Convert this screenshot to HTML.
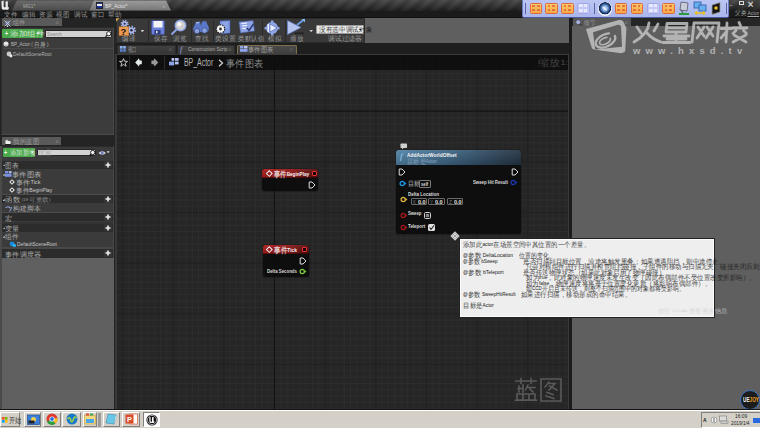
<!DOCTYPE html><html><head><meta charset="utf-8"><style>
*{box-sizing:border-box}
body{margin:0;width:760px;height:428px;overflow:hidden;background:#232323;font-family:"Liberation Sans",sans-serif;position:relative}
.ab{position:absolute}
.t{position:absolute;white-space:nowrap;line-height:1;transform-origin:0 50%}
.c{font-size:1.3em;letter-spacing:.02em;line-height:0;opacity:.8;position:relative;top:.15em}
svg.ab{overflow:visible}
</style></head><body><div class="ab" style="left:0.00px;top:0.00px;width:760.00px;height:10.60px;background:linear-gradient(#4a4a4a,#333 55%,#1e1e1e);"></div>
<div class="ab" style="left:0.00px;top:0.00px;width:760.00px;height:10.60px;background:repeating-linear-gradient(135deg,rgba(0,0,0,.13) 0,rgba(255,255,255,.04) 5.15px,rgba(0,0,0,.13) 10.3px);"></div>
<svg class="ab" style="left:0;top:0" width="10" height="10"><path d="M1.5,1.2 L3.6,0.6 L3.6,6.6 Q4.5,8 5.6,7 L5.6,1.6 L7.8,1.2 L7.8,7.6 L9,7 L8.6,9.2 Q6.6,10.4 5.4,9.4 Q2.6,10.2 1.8,8.4 Z" fill="#f0f0f0"/></svg>
<svg class="ab" style="left:12px;top:0" width="90" height="11"><defs><linearGradient id="g1" x1="0" y1="0" x2="0" y2="1"><stop offset="0" stop-color="#6a6a6a"/><stop offset="1" stop-color="#4a4a4a"/></linearGradient></defs><path d="M0,10.6 L5,0.5 L84,0.5 L88,10.6 Z" fill="url(#g1)"/></svg>
<div class="t" id="t0" style="left:23.00px;top:2.80px;font-size:6px;color:#a8a8a8;transform:scaleX(0.800);">MG1*</div>
<svg class="ab" style="left:89px;top:0" width="84" height="11"><defs><linearGradient id="g2" x1="0" y1="0" x2="0" y2="1"><stop offset="0" stop-color="#9c9c9c"/><stop offset="1" stop-color="#767676"/></linearGradient></defs><path d="M0.5,10.6 L5,0.5 L77,0.5 L82,10.6 Z" fill="url(#g2)"/></svg>
<div class="ab" style="left:96.00px;top:1.80px;width:7.20px;height:6.80px;background:linear-gradient(#2a3a70 0 12%,#f2f2f2 12% 62%,#1a2f90 62%);border:.6px solid #223"></div>
<div class="t" id="t1" style="left:105.40px;top:2.90px;font-size:6px;color:#e4e4e4;transform:scaleX(0.811);">BP_Actor*</div>
<div class="t" id="t2" style="left:161.50px;top:2.60px;font-size:6px;color:#aaa;"><span class="c">×</span></div>
<div class="ab" style="left:0.00px;top:10.60px;width:760.00px;height:7.20px;background:#1b1b1b;border-bottom:1px solid #111"></div>
<div class="t" id="t3" style="left:4.00px;top:12.20px;font-size:5px;color:#b4b4b4;transform:scaleX(0.925);"><span class="c">文件</span></div>
<div class="t" id="t4" style="left:22.00px;top:12.20px;font-size:5px;color:#b4b4b4;transform:scaleX(0.925);"><span class="c">编辑</span></div>
<div class="t" id="t5" style="left:39.00px;top:12.20px;font-size:5px;color:#b4b4b4;transform:scaleX(0.925);"><span class="c">资源</span></div>
<div class="t" id="t6" style="left:56.00px;top:12.20px;font-size:5px;color:#b4b4b4;transform:scaleX(0.925);"><span class="c">视图</span></div>
<div class="t" id="t7" style="left:74.00px;top:12.20px;font-size:5px;color:#b4b4b4;transform:scaleX(0.925);"><span class="c">调试</span></div>
<div class="t" id="t8" style="left:91.00px;top:12.20px;font-size:5px;color:#b4b4b4;transform:scaleX(0.925);"><span class="c">窗口</span></div>
<div class="t" id="t9" style="left:108.00px;top:12.20px;font-size:5px;color:#b4b4b4;transform:scaleX(0.925);"><span class="c">帮助</span></div>
<div class="t" id="t10" style="left:735.00px;top:11.30px;font-size:5.5px;color:#a8a8a8;transform:scaleX(0.917);">父类 <u>Actor</u></div>
<div class="ab" style="left:521.9px;top:-1px;width:207px;height:19px;background:linear-gradient(#bcc6f4,#aab6ec);border:1px solid #6a78c0;border-bottom:1px solid #4a58a0;border-radius:0 0 2px 2px"></div>
<div class="ab" style="left:529.80px;top:2.50px;width:12.50px;height:11.50px;background:linear-gradient(#fdc868,#f6a848);border:1px solid #e06a40;border-radius:1.5px"></div>
<div class="ab" style="left:532.40px;top:4.60px;width:2.80px;height:2.60px;background:rgba(214,50,30,.55);border-radius:.5px"></div>
<div class="ab" style="left:532.40px;top:8.90px;width:2.80px;height:2.60px;background:rgba(214,50,30,.55);border-radius:.5px"></div>
<div class="ab" style="left:536.90px;top:4.60px;width:2.80px;height:2.60px;background:rgba(214,50,30,.55);border-radius:.5px"></div>
<div class="ab" style="left:536.90px;top:8.90px;width:2.80px;height:2.60px;background:rgba(214,50,30,.55);border-radius:.5px"></div>
<div class="ab" style="left:545.00px;top:2.50px;width:12.50px;height:11.50px;background:linear-gradient(#fdc868,#f6a848);border:1px solid #e06a40;border-radius:1.5px"></div>
<div class="ab" style="left:547.60px;top:4.60px;width:2.80px;height:2.60px;background:rgba(214,50,30,.55);border-radius:.5px"></div>
<div class="ab" style="left:547.60px;top:8.90px;width:2.80px;height:2.60px;background:rgba(214,50,30,.55);border-radius:.5px"></div>
<div class="ab" style="left:552.10px;top:4.60px;width:2.80px;height:2.60px;background:rgba(214,50,30,.55);border-radius:.5px"></div>
<div class="ab" style="left:552.10px;top:8.90px;width:2.80px;height:2.60px;background:rgba(214,50,30,.55);border-radius:.5px"></div>
<div class="ab" style="left:561.00px;top:2.50px;width:12.50px;height:11.50px;background:linear-gradient(#fdc868,#f6a848);border:1px solid #e06a40;border-radius:1.5px"></div>
<div class="ab" style="left:563.60px;top:4.60px;width:2.80px;height:2.60px;background:rgba(214,50,30,.55);border-radius:.5px"></div>
<div class="ab" style="left:563.60px;top:8.90px;width:2.80px;height:2.60px;background:rgba(214,50,30,.55);border-radius:.5px"></div>
<div class="ab" style="left:568.10px;top:4.60px;width:2.80px;height:2.60px;background:rgba(214,50,30,.55);border-radius:.5px"></div>
<div class="ab" style="left:568.10px;top:8.90px;width:2.80px;height:2.60px;background:rgba(214,50,30,.55);border-radius:.5px"></div>
<div class="ab" style="left:577.00px;top:2.50px;width:12.50px;height:11.50px;background:#c4c8f6;border:1px solid #a4a8e8;border-radius:1.5px"></div>
<div class="ab" style="left:579.40px;top:4.40px;width:3.20px;height:3.00px;background:rgba(245,245,255,.7);border-radius:.5px"></div>
<div class="ab" style="left:579.40px;top:8.70px;width:3.20px;height:3.00px;background:rgba(245,245,255,.7);border-radius:.5px"></div>
<div class="ab" style="left:583.90px;top:4.40px;width:3.20px;height:3.00px;background:rgba(245,245,255,.7);border-radius:.5px"></div>
<div class="ab" style="left:583.90px;top:8.70px;width:3.20px;height:3.00px;background:rgba(245,245,255,.7);border-radius:.5px"></div>
<div class="ab" style="left:597.7px;top:1.5px;width:14px;height:14px;border-radius:50%;background:radial-gradient(circle at 50% 45%,#e0ecf8 0,#8ab0e0 2.5px,#2a5090 4.6px,#101e40 5.8px,#f0f4fc 6.4px)"></div>
<div class="ab" style="left:602.20px;top:7.50px;width:5.00px;height:1.40px;background:#ffffff;transform:rotate(45deg)"></div>
<div class="ab" style="left:614.80px;top:2.50px;width:12.50px;height:11.50px;background:linear-gradient(#fdc868,#f6a848);border:1px solid #e06a40;border-radius:1.5px"></div>
<div class="ab" style="left:617.40px;top:4.60px;width:2.80px;height:2.60px;background:rgba(214,50,30,.55);border-radius:.5px"></div>
<div class="ab" style="left:617.40px;top:8.90px;width:2.80px;height:2.60px;background:rgba(214,50,30,.55);border-radius:.5px"></div>
<div class="ab" style="left:621.90px;top:4.60px;width:2.80px;height:2.60px;background:rgba(214,50,30,.55);border-radius:.5px"></div>
<div class="ab" style="left:621.90px;top:8.90px;width:2.80px;height:2.60px;background:rgba(214,50,30,.55);border-radius:.5px"></div>
<div class="ab" style="left:630.60px;top:2.50px;width:12.50px;height:11.50px;background:linear-gradient(#fdc868,#f6a848);border:1px solid #e06a40;border-radius:1.5px"></div>
<div class="ab" style="left:633.20px;top:4.60px;width:2.80px;height:2.60px;background:rgba(214,50,30,.55);border-radius:.5px"></div>
<div class="ab" style="left:633.20px;top:8.90px;width:2.80px;height:2.60px;background:rgba(214,50,30,.55);border-radius:.5px"></div>
<div class="ab" style="left:637.70px;top:4.60px;width:2.80px;height:2.60px;background:rgba(214,50,30,.55);border-radius:.5px"></div>
<div class="ab" style="left:637.70px;top:8.90px;width:2.80px;height:2.60px;background:rgba(214,50,30,.55);border-radius:.5px"></div>
<div class="ab" style="left:647.00px;top:2.50px;width:12.50px;height:11.50px;background:#c4c8f6;border:1px solid #a4a8e8;border-radius:1.5px"></div>
<div class="ab" style="left:649.40px;top:4.40px;width:3.20px;height:3.00px;background:rgba(245,245,255,.7);border-radius:.5px"></div>
<div class="ab" style="left:649.40px;top:8.70px;width:3.20px;height:3.00px;background:rgba(245,245,255,.7);border-radius:.5px"></div>
<div class="ab" style="left:653.90px;top:4.40px;width:3.20px;height:3.00px;background:rgba(245,245,255,.7);border-radius:.5px"></div>
<div class="ab" style="left:653.90px;top:8.70px;width:3.20px;height:3.00px;background:rgba(245,245,255,.7);border-radius:.5px"></div>
<div class="ab" style="left:662.00px;top:2.50px;width:12.50px;height:11.50px;background:linear-gradient(#fdc868,#f6a848);border:1px solid #e06a40;border-radius:1.5px"></div>
<div class="ab" style="left:664.60px;top:4.60px;width:2.80px;height:2.60px;background:rgba(214,50,30,.55);border-radius:.5px"></div>
<div class="ab" style="left:664.60px;top:8.90px;width:2.80px;height:2.60px;background:rgba(214,50,30,.55);border-radius:.5px"></div>
<div class="ab" style="left:669.10px;top:4.60px;width:2.80px;height:2.60px;background:rgba(214,50,30,.55);border-radius:.5px"></div>
<div class="ab" style="left:669.10px;top:8.90px;width:2.80px;height:2.60px;background:rgba(214,50,30,.55);border-radius:.5px"></div>
<svg class="ab" style="left:678px;top:1px" width="12" height="15"><path d="M3,1 L10,2 L9,10 L2,9 Z" fill="#c8ccd8" stroke="#556" stroke-width=".8"/><path d="M3,9 L5,12" stroke="#555" stroke-width="1.2"/><rect x="1" y="12" width="10" height="2" fill="#2a9a3a"/></svg>
<svg class="ab" style="left:693px;top:1px" width="14" height="15"><rect x="1" y="1" width="7" height="6" fill="#6ab0f0" stroke="#2a5aa8" stroke-width=".8"/><rect x="6" y="4" width="7" height="6" fill="#6ab0f0" stroke="#2a5aa8" stroke-width=".8"/><path d="M2,12 L12,12 M2,12 L4,10.5 M2,12 L4,13.5 M12,12 L10,10.5 M12,12 L10,13.5" stroke="#e8c020" stroke-width="1.3"/></svg>
<svg class="ab" style="left:710px;top:1px" width="12" height="15"><path d="M2,4 L10,1.5 L10,11 L2,13.5 Z" fill="#151515" stroke="#999" stroke-width=".8"/><circle cx="6" cy="7" r="1.8" fill="#e8c030"/></svg>
<div class="ab" style="left:525.30px;top:3.00px;width:1.20px;height:10.50px;background:#5a64a0;"></div>
<div class="ab" style="left:593.80px;top:3.00px;width:1.20px;height:10.50px;background:#5a64a0;"></div>
<div class="ab" style="left:726.00px;top:3.00px;width:1.20px;height:10.50px;background:#5a64a0;"></div>
<div class="t" id="t11" style="left:729.50px;top:1.00px;font-size:5px;color:#ccc;">_</div>
<div class="ab" style="left:738.50px;top:1.00px;width:5.00px;height:4.20px;background:transparent;border:1.2px solid #ddd"></div>
<div class="t" id="t12" style="left:747.50px;top:0.00px;font-size:8px;color:#eee;font-weight:bold;"><span class="c">×</span></div>
<div class="ab" style="left:0.00px;top:17.80px;width:116.00px;height:392.00px;background:#242424;"></div>
<div class="ab" style="left:2.00px;top:18.20px;width:59.60px;height:8.30px;background:#5a5a5a;border-radius:1px 1px 0 0"></div>
<svg class="ab" style="left:4px;top:19.5px" width="7" height="7"><circle cx="3.5" cy="3" r="2.2" fill="#7a84a8"/><path d="M0.5,0.5 L6.5,6.5 M6.5,0.5 L0.5,6.5" stroke="#c8d0e8" stroke-width=".8"/><circle cx="3.5" cy="6.3" r=".8" fill="#eee"/></svg>
<div class="t" id="t13" style="left:13.00px;top:20.30px;font-size:5px;color:#a8a8a8;transform:scaleX(0.877);"><span class="c">组件</span></div>
<div class="t" id="t14" style="left:55.00px;top:19.80px;font-size:5.5px;color:#8a8a8a;"><span class="c">×</span></div>
<div class="ab" style="left:0.80px;top:26.50px;width:113.00px;height:108.20px;background:#3c3c3c;border:1px solid;border-color:#2a2a2a #484848 #4a4a4a #2a2a2a"></div>
<div class="ab" style="left:2.30px;top:28.80px;width:40.70px;height:9.50px;background:#4aa94a;border-radius:1px"></div>
<div class="t" id="t15" style="left:5.00px;top:30.30px;font-size:7.5px;color:#fff;font-weight:bold;transform:scaleX(0.700);">+</div>
<div class="t" id="t16" style="left:9.50px;top:31.30px;font-size:5.5px;color:#f4f4f4;transform:scaleX(1.215);"><span class="c">添加组件</span></div>
<div class="ab" style="left:36.50px;top:32.40px;width:3.40px;height:2.10px;background:#f0f0f0;clip-path:polygon(0 0,100% 0,50% 100%)"></div>
<div class="ab" style="left:45.00px;top:29.70px;width:67.00px;height:7.90px;background:#d2d2d2;border:.8px solid #262626;border-radius:1px"></div>
<div class="t" id="t17" style="left:47.40px;top:31.20px;font-size:6px;color:#8a8a8a;transform:scaleX(0.789);">Search</div>
<svg class="ab" style="left:104px;top:29.5px" width="8" height="8"><circle cx="4.7" cy="3.7" r="2.1" fill="#f8f8f8" stroke="#161616" stroke-width=".9"/><path d="M3.1,5.4 L1.6,6.9" stroke="#111" stroke-width="1.3"/></svg>
<svg class="ab" style="left:2.5px;top:41px" width="6" height="6"><circle cx="3" cy="3" r="2.5" fill="#e8e8e8"/><path d="M1,4 Q3,5.5 5,4" stroke="#777" stroke-width=".5" fill="none"/></svg>
<div class="t" id="t18" style="left:11.00px;top:41.50px;font-size:5.5px;color:#bdbdbd;transform:scaleX(0.817);">BP_Actor ( <span class="c">自身</span> )</div>
<div class="ab" style="left:2.50px;top:48.00px;width:110.00px;height:1.00px;background:#4a4a4a;"></div>
<svg class="ab" style="left:5.5px;top:51px" width="7" height="7"><circle cx="3" cy="3" r="2.4" fill="#c8c8c8"/><circle cx="5" cy="5" r="1.4" fill="#eee"/></svg>
<div class="t" id="t19" style="left:13.00px;top:52.08px;font-size:5.3px;color:#b4b4b4;transform:scaleX(0.895);">DefaultSceneRoot</div>
<div class="ab" style="left:2.00px;top:137.30px;width:59.30px;height:8.00px;background:#5a5a5a;border-radius:1px 1px 0 0"></div>
<svg class="ab" style="left:4.5px;top:138.5px" width="6" height="6"><path d="M0.5,5.5 L0.5,1.5 L2.5,0.5 L2.5,2 L5.5,2 L5.5,5.5 Z" fill="#eee"/><rect x="0" y="5" width="6" height="1" fill="#222"/></svg>
<div class="t" id="t20" style="left:13.00px;top:139.30px;font-size:5px;color:#a8a8a8;transform:scaleX(0.916);"><span class="c">我的蓝图</span></div>
<div class="t" id="t21" style="left:55.00px;top:138.80px;font-size:5.5px;color:#8a8a8a;"><span class="c">×</span></div>
<div class="ab" style="left:0.80px;top:145.50px;width:113.00px;height:113.00px;background:#3a3a3a;border:1px solid;border-color:#2a2a2a #484848 #4a4a4a #2a2a2a"></div>
<div class="ab" style="left:2.50px;top:147.90px;width:32.50px;height:9.10px;background:#4aa94a;border-radius:1px"></div>
<div class="t" id="t22" style="left:4.30px;top:149.40px;font-size:7.5px;color:#fff;font-weight:bold;transform:scaleX(0.700);">+</div>
<div class="t" id="t23" style="left:9.80px;top:150.20px;font-size:5px;color:#f0f0f0;transform:scaleX(0.911);"><span class="c">添加新项</span></div>
<div class="ab" style="left:30.50px;top:151.30px;width:3.40px;height:2.10px;background:#f0f0f0;clip-path:polygon(0 0,100% 0,50% 100%)"></div>
<div class="ab" style="left:37.00px;top:148.70px;width:58.50px;height:7.50px;background:#d2d2d2;border:.8px solid #262626;border-radius:1px"></div>
<div class="t" id="t24" style="left:38.30px;top:150.30px;font-size:5px;color:#a8a8a8;transform:scaleX(0.916);"><span class="c">搜索</span></div>
<svg class="ab" style="left:88.2px;top:148.7px" width="8" height="8"><circle cx="4.7" cy="3.5" r="2.1" fill="#f8f8f8" stroke="#161616" stroke-width=".9"/><path d="M3.1,5.2 L1.6,6.7" stroke="#111" stroke-width="1.3"/></svg>
<svg class="ab" style="left:97.5px;top:149.5px" width="9" height="6"><path d="M0.4,3 Q4.2,-0.6 8,3 Q4.2,6.6 0.4,3 Z" fill="#d8d8e4"/><circle cx="4.2" cy="3" r="1.4" fill="#6a78c0"/></svg>
<div class="ab" style="left:106.50px;top:151.30px;width:3.20px;height:2.00px;background:#e0e0e0;clip-path:polygon(0 0,100% 0,50% 100%)"></div>
<div class="ab" style="left:2.00px;top:160.60px;width:111.00px;height:8.40px;background:#2c2c2c;"></div>
<div class="ab" style="left:2.50px;top:164.30px;width:2.20px;height:2.20px;background:#c8c8c8;clip-path:polygon(100% 0,100% 100%,0 100%)"></div>
<div class="t" id="t25" style="left:4.90px;top:162.90px;font-size:5.5px;color:#c8c8c8;transform:scaleX(0.952);"><span class="c">图表</span></div>
<div class="ab" style="left:104.00px;top:161.20px;width:8.00px;height:7.20px;background:#353535;border-radius:1px"></div>
<svg class="ab" style="left:105px;top:161.80px" width="6" height="6"><path d="M3,0.5 L3,5.5 M0.5,3 L5.5,3" stroke="#eee" stroke-width="1.6"/></svg>
<div class="ab" style="left:2.00px;top:169.00px;width:111.00px;height:25.30px;background:#3b3b3b;"></div>
<div class="ab" style="left:2.50px;top:173.50px;width:2.20px;height:2.20px;background:#c8c8c8;clip-path:polygon(100% 0,100% 100%,0 100%)"></div>
<svg class="ab" style="left:5px;top:171px" width="7" height="6"><rect x="0" y="3" width="6.5" height="2.8" fill="#7a90e0"/><rect x="0" y="0" width="3" height="2.5" fill="#7a90e0"/><rect x="3.7" y="0" width="2.8" height="2.5" fill="#a8b8f0"/></svg>
<div class="t" id="t26" style="left:12.30px;top:171.90px;font-size:5.5px;color:#cccccc;transform:scaleX(1.030);"><span class="c">事件图表</span></div>
<div class="ab" style="left:10.00px;top:180.00px;width:4.00px;height:4.00px;background:transparent;border:1px solid #eee;transform:rotate(45deg)"></div>
<div class="t" id="t27" style="left:16.30px;top:179.80px;font-size:5.5px;color:#cccccc;transform:scaleX(1.010);"><span class="c">事件</span>Tick</div>
<div class="ab" style="left:10.00px;top:188.20px;width:4.00px;height:4.00px;background:transparent;border:1px solid #eee;transform:rotate(45deg)"></div>
<div class="t" id="t28" style="left:16.30px;top:188.00px;font-size:5.5px;color:#cccccc;transform:scaleX(0.926);"><span class="c">事件</span>BeginPlay</div>
<div class="ab" style="left:2.00px;top:194.30px;width:111.00px;height:0.80px;background:#4c4c4c;"></div>
<div class="ab" style="left:2.00px;top:195.00px;width:111.00px;height:8.40px;background:#2c2c2c;"></div>
<div class="ab" style="left:2.50px;top:198.70px;width:2.20px;height:2.20px;background:#c8c8c8;clip-path:polygon(100% 0,100% 100%,0 100%)"></div>
<div class="t" id="t29" style="left:4.90px;top:197.30px;font-size:5.5px;color:#c8c8c8;transform:scaleX(1.067);"><span class="c">函数</span><span style="font-size:4.3px;color:#999"> (19 <span class="c">可重载</span>)</span></div>
<div class="ab" style="left:104.00px;top:195.60px;width:8.00px;height:7.20px;background:#353535;border-radius:1px"></div>
<svg class="ab" style="left:105px;top:196.20px" width="6" height="6"><path d="M3,0.5 L3,5.5 M0.5,3 L5.5,3" stroke="#eee" stroke-width="1.6"/></svg>
<div class="ab" style="left:2.00px;top:203.40px;width:111.00px;height:8.60px;background:#3b3b3b;"></div>
<svg class="ab" style="left:5px;top:205px" width="8" height="7"><path d="M0.5,2.5 Q3,1 5,2.5" stroke="#9ab0e8" stroke-width="1" fill="none"/><path d="M4.2,1.5 L5.6,2.6 L4,3.4" fill="#9ab0e8"/><path d="M6.5,2 Q6,5 4.5,6.5" stroke="#9ab0e8" stroke-width="1" fill="none"/></svg>
<div class="t" id="t30" style="left:12.80px;top:205.80px;font-size:5.5px;color:#cccccc;transform:scaleX(0.967);"><span class="c">构建脚本</span></div>
<div class="ab" style="left:2.00px;top:212.00px;width:111.00px;height:1.00px;background:#4c4c4c;"></div>
<div class="ab" style="left:2.00px;top:213.30px;width:111.00px;height:8.20px;background:#2c2c2c;"></div>
<div class="t" id="t31" style="left:4.90px;top:215.50px;font-size:5.5px;color:#c8c8c8;transform:scaleX(0.989);"><span class="c">宏</span></div>
<div class="ab" style="left:104.00px;top:213.90px;width:8.00px;height:7.00px;background:#353535;border-radius:1px"></div>
<svg class="ab" style="left:105px;top:214.40px" width="6" height="6"><path d="M3,0.5 L3,5.5 M0.5,3 L5.5,3" stroke="#eee" stroke-width="1.6"/></svg>
<div class="ab" style="left:2.00px;top:221.50px;width:111.00px;height:2.10px;background:#333;"></div>
<div class="ab" style="left:2.00px;top:223.60px;width:111.00px;height:8.20px;background:#2c2c2c;"></div>
<div class="ab" style="left:2.50px;top:227.20px;width:2.20px;height:2.20px;background:#c8c8c8;clip-path:polygon(100% 0,100% 100%,0 100%)"></div>
<div class="t" id="t32" style="left:4.90px;top:225.80px;font-size:5.5px;color:#c8c8c8;transform:scaleX(1.029);"><span class="c">变量</span></div>
<div class="ab" style="left:104.00px;top:224.20px;width:8.00px;height:7.00px;background:#353535;border-radius:1px"></div>
<svg class="ab" style="left:105px;top:224.70px" width="6" height="6"><path d="M3,0.5 L3,5.5 M0.5,3 L5.5,3" stroke="#eee" stroke-width="1.6"/></svg>
<div class="ab" style="left:2.00px;top:231.80px;width:111.00px;height:15.50px;background:#3b3b3b;"></div>
<div class="ab" style="left:2.50px;top:235.50px;width:2.20px;height:2.20px;background:#c8c8c8;clip-path:polygon(100% 0,100% 100%,0 100%)"></div>
<div class="t" id="t33" style="left:4.90px;top:233.78px;font-size:5.3px;color:#c4c4c4;transform:scaleX(0.953);"><span class="c">组件</span></div>
<svg class="ab" style="left:8.5px;top:240.5px" width="8" height="7"><circle cx="3" cy="2.8" r="2.4" fill="#1a8ad8"/><circle cx="5.3" cy="4.5" r="1.8" fill="#28b0f0"/></svg>
<div class="t" id="t34" style="left:16.50px;top:241.50px;font-size:5.5px;color:#cccccc;transform:scaleX(0.891);">DefaultSceneRoot</div>
<div class="ab" style="left:2.00px;top:247.30px;width:111.00px;height:1.70px;background:#474747;"></div>
<div class="ab" style="left:2.00px;top:249.00px;width:111.00px;height:8.80px;background:#2c2c2c;"></div>
<div class="t" id="t35" style="left:4.90px;top:251.50px;font-size:5.5px;color:#c8c8c8;transform:scaleX(1.015);"><span class="c">事件调度器</span></div>
<div class="ab" style="left:104.00px;top:249.60px;width:8.00px;height:7.60px;background:#353535;border-radius:1px"></div>
<svg class="ab" style="left:105px;top:250.40px" width="6" height="6"><path d="M3,0.5 L3,5.5 M0.5,3 L5.5,3" stroke="#eee" stroke-width="1.6"/></svg>
<div class="ab" style="left:1.50px;top:258.00px;width:112.30px;height:151.20px;background:#606060;"></div>
<div class="ab" style="left:0.00px;top:145.50px;width:1.50px;height:263.70px;background:#4a4a4a;"></div>
<div class="ab" style="left:116.00px;top:17.80px;width:454.00px;height:25.40px;background:#5f5f5f;"></div>
<div class="ab" style="left:116.00px;top:18.30px;width:248.80px;height:24.40px;background:#393939;border:1px solid #2b2b2b;border-radius:1px"></div>
<div class="ab" style="left:116.00px;top:18.30px;width:3.50px;height:3.50px;background:#d0a848;clip-path:polygon(0 0,100% 0,0 100%)"></div>
<div class="ab" style="left:147.60px;top:19.50px;width:1.00px;height:22.00px;background:#2a2a2a;"></div>
<div class="ab" style="left:190.60px;top:19.50px;width:1.00px;height:22.00px;background:#2a2a2a;"></div>
<div class="ab" style="left:212.70px;top:19.50px;width:1.00px;height:22.00px;background:#2a2a2a;"></div>
<div class="ab" style="left:261.60px;top:19.50px;width:1.00px;height:22.00px;background:#2a2a2a;"></div>
<div class="ab" style="left:284.50px;top:19.50px;width:1.00px;height:22.00px;background:#2a2a2a;"></div>
<div class="t" id="t36" style="left:121.90px;top:36.30px;font-size:5px;color:#b0b0b0;transform:scaleX(0.925);"><span class="c">编译</span></div>
<div class="t" id="t37" style="left:153.50px;top:36.30px;font-size:5px;color:#b0b0b0;transform:scaleX(0.925);"><span class="c">保存</span></div>
<div class="t" id="t38" style="left:173.20px;top:36.30px;font-size:5px;color:#b0b0b0;transform:scaleX(0.925);"><span class="c">浏览</span></div>
<div class="t" id="t39" style="left:195.40px;top:36.30px;font-size:5px;color:#b0b0b0;transform:scaleX(0.916);"><span class="c">查找</span></div>
<div class="t" id="t40" style="left:215.00px;top:36.30px;font-size:5px;color:#b0b0b0;transform:scaleX(0.975);"><span class="c">类设置</span></div>
<div class="t" id="t41" style="left:237.90px;top:36.30px;font-size:5px;color:#b0b0b0;transform:scaleX(0.925);"><span class="c">类默认值</span></div>
<div class="t" id="t42" style="left:267.90px;top:36.30px;font-size:5px;color:#b0b0b0;transform:scaleX(0.925);"><span class="c">模拟</span></div>
<div class="t" id="t43" style="left:290.00px;top:36.30px;font-size:5px;color:#b0b0b0;transform:scaleX(0.925);"><span class="c">播放</span></div>
<div class="t" id="t44" style="left:328.00px;top:36.30px;font-size:5px;color:#b0b0b0;transform:scaleX(0.955);"><span class="c">调试过滤器</span></div>
<svg class="ab" style="left:117px;top:18.5px" width="22" height="19">
<g fill="#aab6ec"><circle cx="7.6" cy="4.8" r="2.7"/><circle cx="14.5" cy="11.3" r="3.1"/></g>
<g fill="none" stroke="#aab6ec" stroke-width="1.5"><circle cx="7.6" cy="4.8" r="3.3" stroke-dasharray="1.3 1.3"/><circle cx="14.5" cy="11.3" r="3.8" stroke-dasharray="1.5 1.4"/></g>
<g fill="#2a2a3a"><circle cx="7.6" cy="4.8" r="1"/><circle cx="14.5" cy="11.3" r="1.2"/></g>
<rect x="2" y="7.7" width="9.8" height="8.9" fill="#ec9a50" stroke="#b06a30" stroke-width=".4"/>
<text x="3.6" y="15.6" font-family="Liberation Sans" font-weight="bold" font-size="9.5" fill="#111">?</text></svg>
<div class="ab" style="left:140.60px;top:30.00px;width:3.60px;height:2.20px;background:#d0d0d0;clip-path:polygon(0 0,100% 0,50% 100%)"></div>
<svg class="ab" style="left:151px;top:19.5px" width="14" height="15"><rect x="0.5" y="0.5" width="13" height="14" rx="1" fill="#6a80d8" stroke="#3a4a90" stroke-width=".6"/><rect x="2.5" y="1" width="9" height="6.5" fill="#f4f4f4"/><rect x="3.5" y="10" width="6" height="4" fill="#2a3a80"/><rect x="5" y="10.8" width="1.6" height="2.5" fill="#ddd"/></svg>
<svg class="ab" style="left:170px;top:19px" width="18" height="17"><circle cx="10.5" cy="6.5" r="5.3" fill="#cfcfcf" stroke="#8ea4e4" stroke-width="1.4"/><circle cx="9.3" cy="5.2" r="2.2" fill="#f4f4f4"/><path d="M6.5,10.5 L1.5,15.5" stroke="#8ea4e4" stroke-width="2"/></svg>
<svg class="ab" style="left:192px;top:20px" width="18" height="15"><path d="M1,9 L4,2 L8,1.5 L9,6 L10,1.5 L14,1 L17,8 L16,12 L2,12 Z" fill="#5a78c8"/><circle cx="5" cy="11" r="2.7" fill="#8aa0e0" stroke="#2a3a70" stroke-width=".6"/><circle cx="12.5" cy="10.5" r="2.7" fill="#8aa0e0" stroke="#2a3a70" stroke-width=".6"/><path d="M4,3 L7,2.5" stroke="#c0d0f8" stroke-width="1"/></svg>
<svg class="ab" style="left:214px;top:19.5px" width="18" height="16"><path d="M6,1 L16,0.5 L16,13 L6,14 Z" fill="#7c96e0" stroke="#4a60b0" stroke-width=".5"/><path d="M8,3 L14,3 M8,5 L14,5 M8,7 L14,7" stroke="#b8c8f4" stroke-width=".6"/><circle cx="6.5" cy="9" r="4.2" fill="#f4f4f4" stroke="#222" stroke-width="1.2" stroke-dasharray="1.6 1"/><circle cx="6.5" cy="9" r="1.4" fill="#333"/></svg>
<svg class="ab" style="left:238px;top:20px" width="18" height="15"><path d="M1,2 L15,0.5 L16.5,11 L2.5,13 Z" fill="#8ea4e4" stroke="#4a5ea8" stroke-width=".6"/><path d="M3.5,3.5 L9,3 M4,6 L9,5.5 M4.3,8.5 L8,8.2" stroke="#fff" stroke-width="1"/><path d="M9,8 L11,10.5 L15.5,4" stroke="#2a3a70" stroke-width="1.4" fill="none"/></svg>
<svg class="ab" style="left:264px;top:19.5px" width="17" height="16"><circle cx="8" cy="8" r="6" fill="#8ea4e4"/><g fill="#8ea4e4"><rect x="7" y="0.5" width="2.5" height="3"/><rect x="7" y="12.5" width="2.5" height="3"/><rect x="0.5" y="7" width="3" height="2.5"/><rect x="12.5" y="7" width="3" height="2.5"/></g><path d="M6,4 L13,8 L6,12 Z" fill="#e8eeff" stroke="#4a5ea8" stroke-width=".6"/><rect x="3.5" y="4" width="1.5" height="8" fill="#e8eeff"/></svg>
<svg class="ab" style="left:286px;top:19px" width="20" height="17"><path d="M1.5,1.5 L15,8.5 L1.5,15.5 Z" fill="#b4c4ee" stroke="#6a80c8" stroke-width=".7"/><path d="M11,6 L17.5,1" stroke="#6aa0e8" stroke-width="1.8"/><path d="M15.5,0 L19,0 L19,3.5 Z" fill="#8ab8f0"/><rect x="9" y="13.5" width="9" height="1.5" fill="#222"/></svg>
<div class="ab" style="left:309.40px;top:30.00px;width:3.60px;height:2.20px;background:#d0d0d0;clip-path:polygon(0 0,100% 0,50% 100%)"></div>
<div class="ab" style="left:315.80px;top:25.20px;width:48.20px;height:8.50px;background:#e8e8e8;border:1px solid #9a9a9a;border-radius:1px"></div>
<div class="t" id="t45" style="left:318.60px;top:27.38px;font-size:5.3px;color:#111;transform:scaleX(0.932);"><span class="c">没有选中调试对象</span></div>
<div class="ab" style="left:358.50px;top:28.60px;width:3.50px;height:2.00px;background:#111;clip-path:polygon(0 0,100% 0,50% 100%)"></div>
<div class="ab" style="left:116.00px;top:43.20px;width:454.00px;height:10.80px;background:#1f1f1f;"></div>
<div class="ab" style="left:117.00px;top:45.20px;width:59.00px;height:8.60px;background:linear-gradient(#404040,#363636);border:1px solid #2c2c2c;border-bottom:none;border-radius:1.5px 1.5px 0 0"></div>
<div class="t" id="t46" style="left:168.50px;top:46.80px;font-size:5px;color:#707070;"><span class="c">×</span></div>
<svg class="ab" style="left:119.7px;top:46.2px" width="6" height="6"><rect x="0" y="0" width="2.6" height="2.6" fill="#8ab0f0"/><rect x="3.2" y="0" width="2.6" height="2.6" fill="#8ab0f0"/><rect x="0" y="3.2" width="2.6" height="2.6" fill="#5a80d0"/><rect x="3.2" y="3.2" width="2.6" height="2.6" fill="#5a80d0"/></svg>
<div class="t" id="t47" style="left:128.40px;top:47.00px;font-size:5px;color:#a8a8a8;transform:scaleX(0.604);"><span class="c">视口</span></div>
<div class="ab" style="left:177.40px;top:45.20px;width:58.00px;height:8.60px;background:linear-gradient(#404040,#363636);border:1px solid #2c2c2c;border-bottom:none;border-radius:1.5px 1.5px 0 0"></div>
<div class="t" id="t48" style="left:227.90px;top:46.80px;font-size:5px;color:#707070;"><span class="c">×</span></div>
<div class="t" id="t49" style="left:180.00px;top:45.80px;font-size:8px;color:#8ea0e0;font-style:italic;font-family:'Liberation Serif',serif;">f</div>
<div class="t" id="t50" style="left:187.90px;top:46.68px;font-size:5.3px;color:#b0b0b0;transform:scaleX(0.911);">Construction Scrip</div>
<div class="ab" style="left:237.20px;top:45.20px;width:59.50px;height:8.60px;background:linear-gradient(#4a4a4a,#3e3e3e);border:1px solid #7a6e48;border-bottom:none;border-radius:1.5px 1.5px 0 0"></div>
<div class="t" id="t51" style="left:289.20px;top:46.80px;font-size:5px;color:#707070;"><span class="c">×</span></div>
<svg class="ab" style="left:239.5px;top:46.3px" width="8" height="6"><rect x="0" y="3" width="7.5" height="2.8" fill="#8ea4e8"/><rect x="0" y="0" width="3.3" height="2.5" fill="#8ea4e8"/><rect x="4" y="0" width="3.5" height="2.5" fill="#b8c4f0"/></svg>
<div class="t" id="t52" style="left:248.30px;top:46.80px;font-size:5px;color:#b8b8b8;transform:scaleX(0.896);"><span class="c">事件图表</span></div>
<div class="ab" style="left:117px;top:54px;width:452.3px;height:355.2px;background:#262626;overflow:hidden">
<svg width="452.3" height="355.2" style="position:absolute;left:0;top:0"><g stroke="#2c2c2c" stroke-width="1.1"><line x1="11.89" y1="0" x2="11.89" y2="355.2"/><line x1="18.22" y1="0" x2="18.22" y2="355.2"/><line x1="24.55" y1="0" x2="24.55" y2="355.2"/><line x1="30.88" y1="0" x2="30.88" y2="355.2"/><line x1="37.21" y1="0" x2="37.21" y2="355.2"/><line x1="43.54" y1="0" x2="43.54" y2="355.2"/><line x1="49.87" y1="0" x2="49.87" y2="355.2"/><line x1="62.53" y1="0" x2="62.53" y2="355.2"/><line x1="68.87" y1="0" x2="68.87" y2="355.2"/><line x1="75.20" y1="0" x2="75.20" y2="355.2"/><line x1="81.53" y1="0" x2="81.53" y2="355.2"/><line x1="87.86" y1="0" x2="87.86" y2="355.2"/><line x1="94.19" y1="0" x2="94.19" y2="355.2"/><line x1="100.52" y1="0" x2="100.52" y2="355.2"/><line x1="113.18" y1="0" x2="113.18" y2="355.2"/><line x1="119.51" y1="0" x2="119.51" y2="355.2"/><line x1="125.84" y1="0" x2="125.84" y2="355.2"/><line x1="132.18" y1="0" x2="132.18" y2="355.2"/><line x1="138.51" y1="0" x2="138.51" y2="355.2"/><line x1="144.84" y1="0" x2="144.84" y2="355.2"/><line x1="151.17" y1="0" x2="151.17" y2="355.2"/><line x1="163.83" y1="0" x2="163.83" y2="355.2"/><line x1="170.16" y1="0" x2="170.16" y2="355.2"/><line x1="176.49" y1="0" x2="176.49" y2="355.2"/><line x1="182.82" y1="0" x2="182.82" y2="355.2"/><line x1="189.15" y1="0" x2="189.15" y2="355.2"/><line x1="195.49" y1="0" x2="195.49" y2="355.2"/><line x1="201.82" y1="0" x2="201.82" y2="355.2"/><line x1="214.48" y1="0" x2="214.48" y2="355.2"/><line x1="220.81" y1="0" x2="220.81" y2="355.2"/><line x1="227.14" y1="0" x2="227.14" y2="355.2"/><line x1="233.47" y1="0" x2="233.47" y2="355.2"/><line x1="239.80" y1="0" x2="239.80" y2="355.2"/><line x1="246.13" y1="0" x2="246.13" y2="355.2"/><line x1="252.47" y1="0" x2="252.47" y2="355.2"/><line x1="265.13" y1="0" x2="265.13" y2="355.2"/><line x1="271.46" y1="0" x2="271.46" y2="355.2"/><line x1="277.79" y1="0" x2="277.79" y2="355.2"/><line x1="284.12" y1="0" x2="284.12" y2="355.2"/><line x1="290.45" y1="0" x2="290.45" y2="355.2"/><line x1="296.78" y1="0" x2="296.78" y2="355.2"/><line x1="303.11" y1="0" x2="303.11" y2="355.2"/><line x1="315.77" y1="0" x2="315.77" y2="355.2"/><line x1="322.11" y1="0" x2="322.11" y2="355.2"/><line x1="328.44" y1="0" x2="328.44" y2="355.2"/><line x1="334.77" y1="0" x2="334.77" y2="355.2"/><line x1="341.10" y1="0" x2="341.10" y2="355.2"/><line x1="347.43" y1="0" x2="347.43" y2="355.2"/><line x1="353.76" y1="0" x2="353.76" y2="355.2"/><line x1="366.42" y1="0" x2="366.42" y2="355.2"/><line x1="372.75" y1="0" x2="372.75" y2="355.2"/><line x1="379.09" y1="0" x2="379.09" y2="355.2"/><line x1="385.42" y1="0" x2="385.42" y2="355.2"/><line x1="391.75" y1="0" x2="391.75" y2="355.2"/><line x1="398.08" y1="0" x2="398.08" y2="355.2"/><line x1="404.41" y1="0" x2="404.41" y2="355.2"/><line x1="417.07" y1="0" x2="417.07" y2="355.2"/><line x1="423.40" y1="0" x2="423.40" y2="355.2"/><line x1="429.73" y1="0" x2="429.73" y2="355.2"/><line x1="436.06" y1="0" x2="436.06" y2="355.2"/><line x1="442.39" y1="0" x2="442.39" y2="355.2"/><line x1="448.73" y1="0" x2="448.73" y2="355.2"/><line x1="0" y1="0.22" x2="452.3" y2="0.22"/><line x1="0" y1="12.88" x2="452.3" y2="12.88"/><line x1="0" y1="19.21" x2="452.3" y2="19.21"/><line x1="0" y1="25.55" x2="452.3" y2="25.55"/><line x1="0" y1="31.88" x2="452.3" y2="31.88"/><line x1="0" y1="38.21" x2="452.3" y2="38.21"/><line x1="0" y1="44.54" x2="452.3" y2="44.54"/><line x1="0" y1="50.87" x2="452.3" y2="50.87"/><line x1="0" y1="63.53" x2="452.3" y2="63.53"/><line x1="0" y1="69.86" x2="452.3" y2="69.86"/><line x1="0" y1="76.19" x2="452.3" y2="76.19"/><line x1="0" y1="82.52" x2="452.3" y2="82.52"/><line x1="0" y1="88.86" x2="452.3" y2="88.86"/><line x1="0" y1="95.19" x2="452.3" y2="95.19"/><line x1="0" y1="101.52" x2="452.3" y2="101.52"/><line x1="0" y1="114.18" x2="452.3" y2="114.18"/><line x1="0" y1="120.51" x2="452.3" y2="120.51"/><line x1="0" y1="126.84" x2="452.3" y2="126.84"/><line x1="0" y1="133.17" x2="452.3" y2="133.17"/><line x1="0" y1="139.50" x2="452.3" y2="139.50"/><line x1="0" y1="145.83" x2="452.3" y2="145.83"/><line x1="0" y1="152.17" x2="452.3" y2="152.17"/><line x1="0" y1="164.83" x2="452.3" y2="164.83"/><line x1="0" y1="171.16" x2="452.3" y2="171.16"/><line x1="0" y1="177.49" x2="452.3" y2="177.49"/><line x1="0" y1="183.82" x2="452.3" y2="183.82"/><line x1="0" y1="190.15" x2="452.3" y2="190.15"/><line x1="0" y1="196.48" x2="452.3" y2="196.48"/><line x1="0" y1="202.81" x2="452.3" y2="202.81"/><line x1="0" y1="215.48" x2="452.3" y2="215.48"/><line x1="0" y1="221.81" x2="452.3" y2="221.81"/><line x1="0" y1="228.14" x2="452.3" y2="228.14"/><line x1="0" y1="234.47" x2="452.3" y2="234.47"/><line x1="0" y1="240.80" x2="452.3" y2="240.80"/><line x1="0" y1="247.13" x2="452.3" y2="247.13"/><line x1="0" y1="253.46" x2="452.3" y2="253.46"/><line x1="0" y1="266.12" x2="452.3" y2="266.12"/><line x1="0" y1="272.45" x2="452.3" y2="272.45"/><line x1="0" y1="278.79" x2="452.3" y2="278.79"/><line x1="0" y1="285.12" x2="452.3" y2="285.12"/><line x1="0" y1="291.45" x2="452.3" y2="291.45"/><line x1="0" y1="297.78" x2="452.3" y2="297.78"/><line x1="0" y1="304.11" x2="452.3" y2="304.11"/><line x1="0" y1="316.77" x2="452.3" y2="316.77"/><line x1="0" y1="323.10" x2="452.3" y2="323.10"/><line x1="0" y1="329.43" x2="452.3" y2="329.43"/><line x1="0" y1="335.76" x2="452.3" y2="335.76"/><line x1="0" y1="342.10" x2="452.3" y2="342.10"/><line x1="0" y1="348.43" x2="452.3" y2="348.43"/><line x1="0" y1="354.76" x2="452.3" y2="354.76"/></g><g stroke="#212121" stroke-width="1"><line x1="5.56" y1="0" x2="5.56" y2="355.2"/><line x1="56.20" y1="0" x2="56.20" y2="355.2"/><line x1="106.85" y1="0" x2="106.85" y2="355.2"/><line x1="208.15" y1="0" x2="208.15" y2="355.2"/><line x1="258.80" y1="0" x2="258.80" y2="355.2"/><line x1="309.44" y1="0" x2="309.44" y2="355.2"/><line x1="360.09" y1="0" x2="360.09" y2="355.2"/><line x1="410.74" y1="0" x2="410.74" y2="355.2"/><line x1="0" y1="6.55" x2="452.3" y2="6.55"/><line x1="0" y1="107.85" x2="452.3" y2="107.85"/><line x1="0" y1="158.50" x2="452.3" y2="158.50"/><line x1="0" y1="209.14" x2="452.3" y2="209.14"/><line x1="0" y1="259.79" x2="452.3" y2="259.79"/><line x1="0" y1="310.44" x2="452.3" y2="310.44"/></g><g stroke="#141414" stroke-width="1.2"><line x1="157.50" y1="0" x2="157.50" y2="355.2"/><line x1="0" y1="57.20" x2="452.3" y2="57.20"/></g></svg>
<div class="ab" style="left:0;top:0;width:452.3px;height:16.2px;background:rgba(10,10,10,.8)"></div>
</div>
<div class="ab" style="left:115.40px;top:53.60px;width:1.80px;height:356.00px;background:#383838;"></div>
<div class="ab" style="left:117.00px;top:53.60px;width:452.30px;height:1.00px;background:#3a3a3a;"></div>
<div class="ab" style="left:568.40px;top:53.60px;width:1.10px;height:356.00px;background:#3a3a3a;"></div>
<svg class="ab" style="left:118.6px;top:57.9px" width="9" height="9"><path d="M4.5,0.6 L5.6,3.3 L8.5,3.4 L6.2,5.2 L7.1,8.2 L4.5,6.5 L1.9,8.2 L2.8,5.2 L0.5,3.4 L3.4,3.3 Z" fill="none" stroke="#cfcfcf" stroke-width=".9"/></svg>
<div class="ab" style="left:129.40px;top:55.50px;width:1.00px;height:14.00px;background:#2c2c2c;"></div>
<svg class="ab" style="left:134.6px;top:57.6px" width="7" height="9"><path d="M0.2,4.4 L4,0.2 L4.6,2.6 L6.8,2.6 L6.8,6.2 L4.6,6.2 L4,8.6 Z" fill="#e4ecec"/></svg>
<svg class="ab" style="left:151px;top:57.6px" width="8" height="9"><path d="M7.3,4.4 L3.4,0.2 L2.8,2.6 L0.4,2.6 L0.4,6.2 L2.8,6.2 L3.4,8.6 Z" fill="#999"/></svg>
<div class="ab" style="left:164.40px;top:55.50px;width:1.00px;height:14.00px;background:#2c2c2c;"></div>
<svg class="ab" style="left:168.9px;top:58.4px" width="10" height="8"><rect x="0" y="3.6" width="5.2" height="3.8" fill="#8ea4e8"/><rect x="2.6" y="0" width="2.6" height="2.8" fill="#c0ccf4"/><rect x="6" y="0" width="3.6" height="2.8" fill="#b4c2f0"/><rect x="6" y="3.6" width="3.6" height="2.8" fill="#b4c2f0"/></svg>
<div class="t" id="t53" style="left:184.00px;top:58.30px;font-size:10px;color:#b4b4b4;transform:scaleX(0.693);">BP_Actor</div>
<svg class="ab" style="left:217.5px;top:58.5px" width="6" height="8"><path d="M1,0.8 L4.5,4 L1,7.2" stroke="#d0d0d0" stroke-width="1.3" fill="none"/></svg>
<div class="t" id="t54" style="left:226.00px;top:59.10px;font-size:8px;color:#a8a8a8;transform:scaleX(0.907);"><span class="c">事件图表</span></div>
<div class="t" id="t55" style="left:538.00px;top:58.80px;font-size:8px;color:#4e4e4e;transform:scaleX(1.098);"><span class="c">缩放</span>1:1</div>
<svg class="ab" style="left:514px;top:377px" width="50" height="26"><g stroke="#5a5a5a" stroke-width="1.6" fill="none" stroke-linecap="square">
<path d="M2,4 L22,4 M7,1.5 L7,6.5 M17,1.5 L17,6.5"/>
<path d="M5,9 L5,15 M9,8 L9,15 M4,11.5 L9,11.5 M14,8 L11.5,13 M13,10.5 L21,10.5 M16,12 L19,15"/>
<path d="M3,17 L21,17 L21,23 L3,23 Z M9,17 L9,23 M15,17 L15,23 M1.5,23.3 L22.5,23.3"/>
<path d="M27,2 L47,2 L47,24 L27,24 Z"/>
<path d="M35,5 L31,10 M34,6.5 L41,6.5 L35,13 M35.5,9 L43,13 M33,15.5 L39,17.5 M32,19 L40,21.5"/>
</g></svg>
<div class="ab" style="left:262.40px;top:168.70px;width:56.10px;height:22.10px;background:rgba(12,12,12,.92);border-radius:2.5px;box-shadow:0 0 1.5px #000"></div>
<div class="ab" style="left:262.40px;top:168.70px;width:56.10px;height:9.30px;background:linear-gradient(rgba(255,255,255,.06),rgba(0,0,0,.15)),linear-gradient(90deg,#a81c1c,#921818 55%,#501010);border-radius:2.5px 2.5px 0 0"></div>
<div class="ab" style="left:262.40px;top:177.00px;width:56.10px;height:1.00px;background:rgba(0,0,0,.3);"></div>
<div class="ab" style="left:266.60px;top:171.05px;width:4.60px;height:4.60px;background:transparent;border:1.1px solid #f0f0f0;transform:rotate(45deg)"></div>
<div class="t" id="t56" style="left:274.00px;top:171.15px;font-size:6px;color:#f4f4f4;font-weight:bold;transform:scaleX(0.775);"><span class="c">事件</span>BeginPlay</div>
<div class="ab" style="left:311.50px;top:170.85px;width:5.00px;height:5.00px;background:#140404;border:1.1px solid #e83030;border-radius:1px"></div>
<svg class="ab" style="left:307.50px;top:180.50px" width="8" height="8"><path d="M1.2,1 L4,1 L7,4 L4,7 L1.2,7 Z" fill="none" stroke="#dcdcdc" stroke-width="1" stroke-linejoin="round"/></svg>
<div class="ab" style="left:262.60px;top:245.00px;width:46.70px;height:31.50px;background:rgba(12,12,12,.92);border-radius:2.5px;box-shadow:0 0 1.5px #000"></div>
<div class="ab" style="left:262.60px;top:245.00px;width:46.70px;height:8.70px;background:linear-gradient(rgba(255,255,255,.06),rgba(0,0,0,.15)),linear-gradient(90deg,#a81c1c,#921818 55%,#501010);border-radius:2.5px 2.5px 0 0"></div>
<div class="ab" style="left:262.60px;top:252.70px;width:46.70px;height:1.00px;background:rgba(0,0,0,.3);"></div>
<div class="ab" style="left:266.80px;top:247.05px;width:4.60px;height:4.60px;background:transparent;border:1.1px solid #f0f0f0;transform:rotate(45deg)"></div>
<div class="t" id="t57" style="left:274.20px;top:247.15px;font-size:6px;color:#f4f4f4;font-weight:bold;transform:scaleX(0.814);"><span class="c">事件</span>Tick</div>
<div class="ab" style="left:302.30px;top:246.85px;width:5.00px;height:5.00px;background:#140404;border:1.1px solid #e83030;border-radius:1px"></div>
<svg class="ab" style="left:298.50px;top:256.70px" width="8" height="8"><path d="M1.2,1 L4,1 L7,4 L4,7 L1.2,7 Z" fill="none" stroke="#dcdcdc" stroke-width="1" stroke-linejoin="round"/></svg>
<div class="t" id="t58" style="left:267.00px;top:269.30px;font-size:5.5px;color:#dadada;font-weight:bold;transform:scaleX(0.789);">Delta Seconds</div>
<svg class="ab" style="left:298.50px;top:268.00px" width="8" height="7"><circle cx="3.2" cy="3.5" r="2.1" fill="#0e0e0e" stroke="#7ed040" stroke-width="1.2"/><path d="M5.4,1.8 L7.4,3.5 L5.4,5.2 Z" fill="#7ed040"/></svg>
<svg class="ab" style="left:399.5px;top:142.5px" width="8" height="7"><rect x="0.5" y="0.5" width="6.5" height="4.5" rx=".8" fill="#d0d0d0"/><path d="M2,5 L2,6.5 L3.5,5" fill="#d0d0d0"/></svg>
<div class="ab" style="left:395.80px;top:150.00px;width:125.60px;height:84.40px;background:rgba(12,12,12,.92);border-radius:2.5px;box-shadow:0 0 1.5px #000"></div>
<div class="ab" style="left:395.80px;top:150.00px;width:125.60px;height:15.00px;background:linear-gradient(rgba(255,255,255,.07),rgba(0,0,0,.18)),linear-gradient(90deg,#5283a6,#3f6888 40%,#2c4458 80%,#243444);border-radius:2.5px 2.5px 0 0"></div>
<div class="t" id="t59" style="left:400.00px;top:151.90px;font-size:9px;color:#9ed0f8;font-style:italic;font-family:'Liberation Serif',serif;">f</div>
<div class="t" id="t60" style="left:407.00px;top:152.20px;font-size:6px;color:#f4f4f4;font-weight:bold;transform:scaleX(0.806);">AddActorWorldOffset</div>
<div class="t" id="t61" style="left:407.00px;top:159.18px;font-size:5.3px;color:#8eaac4;transform:scaleX(0.880);"><span class="c">目标是</span>Actor</div>
<svg class="ab" style="left:398.00px;top:167.50px" width="8" height="8"><path d="M1.2,1 L4,1 L7,4 L4,7 L1.2,7 Z" fill="none" stroke="#dcdcdc" stroke-width="1" stroke-linejoin="round"/></svg>
<svg class="ab" style="left:510.50px;top:167.80px" width="8" height="8"><path d="M1.2,1 L4,1 L7,4 L4,7 L1.2,7 Z" fill="none" stroke="#dcdcdc" stroke-width="1" stroke-linejoin="round"/></svg>
<svg class="ab" style="left:399.00px;top:180.00px" width="8" height="7"><circle cx="3.2" cy="3.5" r="2.1" fill="#0e0e0e" stroke="#1a9ae8" stroke-width="1.2"/><path d="M5.4,1.8 L7.4,3.5 L5.4,5.2 Z" fill="#1a9ae8"/></svg>
<div class="t" id="t62" style="left:408.00px;top:181.38px;font-size:5.3px;color:#dddddd;transform:scaleX(0.875);"><span class="c">目标</span></div>
<div class="ab" style="left:419.00px;top:180.00px;width:11.50px;height:8.00px;background:transparent;border:1px solid #7a7a7a;border-radius:1px"></div>
<div class="t" id="t63" style="left:421.00px;top:182.00px;font-size:5px;color:#dddddd;font-weight:bold;transform:scaleX(0.833);">self</div>
<div class="t" id="t64" style="left:473.00px;top:180.30px;font-size:5.5px;color:#dcdcdc;font-weight:bold;transform:scaleX(0.783);">Sweep Hit Result</div>
<svg class="ab" style="left:510.00px;top:179.00px" width="8" height="7"><circle cx="3.2" cy="3.5" r="2.1" fill="#0e0e0e" stroke="#1a3ab0" stroke-width="1.2"/><path d="M5.4,1.8 L7.4,3.5 L5.4,5.2 Z" fill="#1a3ab0"/></svg>
<div class="t" id="t65" style="left:408.00px;top:192.00px;font-size:5.5px;color:#dcdcdc;font-weight:bold;transform:scaleX(0.816);">Delta Location</div>
<svg class="ab" style="left:399.50px;top:195.60px" width="8" height="7"><circle cx="3.2" cy="3.5" r="2.1" fill="#0e0e0e" stroke="#e8b838" stroke-width="1.2"/><path d="M5.4,1.8 L7.4,3.5 L5.4,5.2 Z" fill="#e8b838"/></svg>
<div class="ab" style="left:410.50px;top:198.20px;width:16.50px;height:7.30px;background:transparent;border:1px solid #6a6a6a;border-radius:1px"></div>
<div class="t" id="t66" style="left:412.50px;top:200.00px;font-size:5px;color:#707070;">X</div>
<div class="t" id="t67" style="left:417.80px;top:199.88px;font-size:5.3px;color:#e6e6e6;font-weight:bold;transform:scaleX(1.029);">0.0</div>
<div class="ab" style="left:428.00px;top:198.20px;width:17.00px;height:7.30px;background:transparent;border:1px solid #6a6a6a;border-radius:1px"></div>
<div class="t" id="t68" style="left:430.00px;top:200.00px;font-size:5px;color:#707070;">Y</div>
<div class="t" id="t69" style="left:435.30px;top:199.88px;font-size:5.3px;color:#e6e6e6;font-weight:bold;transform:scaleX(1.029);">0.0</div>
<div class="ab" style="left:447.00px;top:198.20px;width:16.00px;height:7.30px;background:transparent;border:1px solid #6a6a6a;border-radius:1px"></div>
<div class="t" id="t70" style="left:449.00px;top:200.00px;font-size:5px;color:#707070;">Z</div>
<div class="t" id="t71" style="left:454.30px;top:199.88px;font-size:5.3px;color:#e6e6e6;font-weight:bold;transform:scaleX(1.029);">0.0</div>
<svg class="ab" style="left:399.50px;top:211.50px" width="8" height="7"><circle cx="3.2" cy="3.5" r="2.1" fill="#0e0e0e" stroke="#a81818" stroke-width="1.2"/><path d="M5.4,1.8 L7.4,3.5 L5.4,5.2 Z" fill="#a81818"/></svg>
<div class="t" id="t72" style="left:408.00px;top:211.30px;font-size:5.5px;color:#dcdcdc;font-weight:bold;transform:scaleX(0.765);">Sweep</div>
<div class="ab" style="left:424.00px;top:212.00px;width:7.00px;height:7.00px;background:#1a1a1a;border:1.2px solid #d0d0d0;border-radius:1.5px"></div>
<div class="ab" style="left:426.20px;top:214.20px;width:2.60px;height:2.60px;background:#888;"></div>
<svg class="ab" style="left:399.50px;top:223.90px" width="8" height="7"><circle cx="3.2" cy="3.5" r="2.1" fill="#0e0e0e" stroke="#a81818" stroke-width="1.2"/><path d="M5.4,1.8 L7.4,3.5 L5.4,5.2 Z" fill="#a81818"/></svg>
<div class="t" id="t73" style="left:408.00px;top:223.80px;font-size:5.5px;color:#dcdcdc;font-weight:bold;transform:scaleX(0.810);">Teleport</div>
<div class="ab" style="left:428.00px;top:224.00px;width:7.00px;height:7.00px;background:#e0e0e0;border-radius:1.5px"></div>
<svg class="ab" style="left:428px;top:224px" width="7" height="7"><path d="M1.5,3.5 L3,5.3 L6,1.5" stroke="#222" stroke-width="1.1" fill="none"/></svg>
<div class="ab" style="left:569.30px;top:17.80px;width:2.80px;height:392.00px;background:#1c1c1c;"></div>
<div class="ab" style="left:572.00px;top:17.80px;width:188.00px;height:8.30px;background:#262626;"></div>
<div class="ab" style="left:573.00px;top:18.30px;width:57.80px;height:7.80px;background:#575757;border-radius:1px 1px 0 0"></div>
<svg class="ab" style="left:574.5px;top:19px" width="7" height="7"><circle cx="3.2" cy="3.2" r="2.4" fill="#a8b4e0" stroke="#445" stroke-width=".7"/><path d="M5,5 L6.5,6.5" stroke="#333" stroke-width="1.2"/></svg>
<div class="t" id="t74" style="left:584.00px;top:20.30px;font-size:5px;color:#a8a8a8;transform:scaleX(0.779);"><span class="c">细节</span></div>
<div class="t" id="t75" style="left:624.00px;top:19.80px;font-size:5.5px;color:#8a8a8a;"><span class="c">×</span></div>
<div class="ab" style="left:572.00px;top:26.10px;width:188.00px;height:383.20px;background:#5f5f5f;"></div>
<svg class="ab" style="left:580px;top:14px" width="180" height="44">
<g opacity=".85">
<path d="M6,15 L39,6 Q41,5.5 43,7 L46.4,14 L45.3,36.6 Q45,39 41,39.2 L14,35.5 Q12,35.3 11.5,33 Z" fill="#c2c2c2"/>
<path d="M13,18.3 L38,10.8 Q40,10.5 41,12.5 L42,32.8 L15.2,35.5 Z" fill="#5f5f5f"/>
<g fill="none" stroke="#c2c2c2" stroke-linecap="round">
<ellipse cx="25.5" cy="26.5" rx="10.5" ry="6.2" transform="rotate(-26 25.5 26.5)" stroke-width="2.3" stroke-dasharray="46 12"/>
<ellipse cx="25" cy="27" rx="5.8" ry="3" transform="rotate(-26 25 27)" stroke-width="1.8" stroke-dasharray="24 8"/>
</g>
<g fill="none" stroke="#c2c2c2" stroke-width="2.8" stroke-linecap="round" stroke-linejoin="round">
<path d="M57,13 L61,19 M78,10 L74,17 M69,9 Q68,20 54,28 M67,19 Q72,25 81,28"/>
<path d="M87,9.5 L107,9.5 L106,18 L86,18 Z M86.5,13.8 L106.5,13.8 M84,22 L109,22 M96,18 L96,28 M87,25 L106,25 M83,28.5 L110,28.5"/>
<path d="M114,9 L112,28 M114,9 L139,9 L137,28 M118,13 L124,22 M124,13 L117,24 M127,13 L133,22 M133,13 L126,24"/>
<path d="M147,9 L146,28 M141,14.5 L152,14.5 M147,17 L141,24 M159,8.5 L160.5,11.5 M153,14 L167,14 M156,16.5 L153,19.5 M163.5,16.5 L166.5,19.5 M154,21 L166,28 M166,21 L153,28"/>
</g>
<text x="53" y="39.5" font-family="Liberation Sans" font-size="9.5" font-weight="bold" fill="#c2c2c2" letter-spacing="5.15">www.hxsd.tv</text>
</g></svg>
<div class="ab" style="left:740.2px;top:389.7px;width:20.2px;height:20.2px;border-radius:50%;background:#1c1c1c;border:1.4px solid #3a74c4"></div>
<div class="t" id="t76" style="left:743.00px;top:397.28px;font-size:6.3px;color:#f0f0f0;font-weight:bold;transform:scaleX(0.750);">UE<span style="color:#f0a020">JOY</span></div>
<div class="ab" style="left:459.00px;top:237.60px;width:256.40px;height:80.00px;background:#eeeeee;border:1px solid #222;box-shadow:inset 0 0 0 .8px #fff"></div>
<div class="t" id="t77" style="left:462.50px;top:242.38px;font-size:5.3px;color:#161616;transform:scaleX(0.907);"><span class="c">添加此</span>actor<span class="c">在场景空间中其位置的一个差量。</span></div>
<div class="t" id="t78" style="left:462.50px;top:253.38px;font-size:5.3px;color:#161616;transform:scaleX(0.934);">@<span class="c">参数</span> DeltaLocation</div>
<div class="t" id="t79" style="left:518.50px;top:253.38px;font-size:5.3px;color:#161616;transform:scaleX(0.840);"><span class="c">位置的变化。</span></div>
<div class="t" id="t80" style="left:462.50px;top:258.68px;font-size:5.3px;color:#161616;transform:scaleX(0.860);">@<span class="c">参数</span> bSweep</div>
<div class="t" id="t81" style="left:523.10px;top:258.68px;font-size:5.3px;color:#161616;transform:scaleX(0.915);"><span class="c">是否扫描到目标位置，沿途将触发重叠；如果遭遇阻挡，则中途停止。</span></div>
<div class="t" id="t82" style="left:526.10px;top:263.68px;font-size:5.3px;color:#161616;transform:scaleX(0.908);"><span class="c">只会对根组件进行扫描并检查阻挡碰撞，子组件的移动与扫描无关。碰撞关闭后则无效。</span></div>
<div class="t" id="t83" style="left:462.50px;top:269.98px;font-size:5.3px;color:#161616;transform:scaleX(0.944);">@<span class="c">参数</span> bTeleport</div>
<div class="t" id="t84" style="left:523.10px;top:269.98px;font-size:5.3px;color:#161616;transform:scaleX(0.905);"><span class="c">是否传送物理状态（如果此对象启用了物理碰撞）。</span></div>
<div class="t" id="t85" style="left:526.10px;top:275.18px;font-size:5.3px;color:#161616;transform:scaleX(0.912);"><span class="c">如为</span>true<span class="c">，此对象的物理速度未发生改变（因此布偶部件不受位置改变所影响）。</span></div>
<div class="t" id="t86" style="left:526.10px;top:280.88px;font-size:5.3px;color:#161616;transform:scaleX(0.908);"><span class="c">如为</span>false<span class="c">，物理速度将将基于位置变化更新（将影响布偶部件）。</span></div>
<div class="t" id="t87" style="left:526.10px;top:286.08px;font-size:5.3px;color:#161616;transform:scaleX(0.839);"><span class="c">如</span>CCD<span class="c">开启且未传送，则整个扫描范围中的对象都将受影响。</span></div>
<div class="t" id="t88" style="left:462.50px;top:292.08px;font-size:5.3px;color:#161616;transform:scaleX(0.893);">@<span class="c">参数</span> SweepHitResult</div>
<div class="t" id="t89" style="left:520.50px;top:292.08px;font-size:5.3px;color:#161616;transform:scaleX(0.907);"><span class="c">如果进行扫描，移动形成的命中结果。</span></div>
<div class="t" id="t90" style="left:462.50px;top:302.98px;font-size:5.3px;color:#161616;transform:scaleX(0.911);"><span class="c">目标是</span>Actor</div>
<div class="t" id="t91" style="left:658.00px;top:308.78px;font-size:4.3px;color:#d4d4d4;transform:scaleX(1.063);"><span class="c">按住</span> Ctrl+Alt <span class="c">查看更多信息</span></div>
<svg class="ab" style="left:449.5px;top:231px" width="10" height="10"><path d="M5,0.3 L9.7,5 L5,9.7 L0.3,5 Z" fill="#f0f0f0" stroke="#333" stroke-width=".6"/><path d="M5,2.3 L7.7,5 L5,7.7 L2.3,5 Z M3.6,3.6 L6.4,6.4 M6.4,3.6 L3.6,6.4" fill="none" stroke="#666" stroke-width=".6"/></svg>
<div class="ab" style="left:0.00px;top:409.20px;width:760.00px;height:1.20px;background:#141414;"></div>
<div class="ab" style="left:0.00px;top:410.30px;width:760.00px;height:17.70px;background:#d4d0c8;border-top:1px solid #fff"></div>
<div class="ab" style="left:0.00px;top:412.00px;width:19.50px;height:15.00px;background:transparent;border:1px solid;border-color:#fff #808080 #808080 #fff"></div>
<svg class="ab" style="left:2px;top:416.5px" width="6" height="6"><rect x="0" y="0" width="2.6" height="2.6" fill="#f25022"/><rect x="3" y="0" width="2.6" height="2.6" fill="#7fba00"/><rect x="0" y="3" width="2.6" height="2.6" fill="#00a4ef"/><rect x="3" y="3" width="2.6" height="2.6" fill="#ffb900"/></svg>
<div class="t" id="t92" style="left:8.50px;top:416.60px;font-size:6px;color:#111;transform:scaleX(0.772);"><span class="c">开始</span></div>
<div class="ab" style="left:24.00px;top:412.00px;width:17.00px;height:15.00px;background:transparent;border:1px solid;border-color:#fff #808080 #808080 #fff"></div>
<div class="ab" style="left:43.40px;top:412.00px;width:17.40px;height:15.00px;background:transparent;border:1px solid;border-color:#fff #808080 #808080 #fff"></div>
<div class="ab" style="left:62.00px;top:412.00px;width:19.00px;height:15.00px;background:transparent;border:1px solid;border-color:#fff #808080 #808080 #fff"></div>
<div class="ab" style="left:82.50px;top:412.00px;width:14.50px;height:15.00px;background:transparent;border:1px solid;border-color:#fff #808080 #808080 #fff"></div>
<div class="ab" style="left:102.60px;top:412.00px;width:17.40px;height:15.00px;background:transparent;border:1px solid;border-color:#fff #808080 #808080 #fff"></div>
<div class="ab" style="left:122.00px;top:412.00px;width:18.00px;height:15.00px;background:transparent;border:1px solid;border-color:#fff #808080 #808080 #fff"></div>
<div class="ab" style="left:142.60px;top:412.00px;width:17.90px;height:15.00px;background:#fdfdfd;border:1px solid;border-color:#808080 #fff #fff #808080"></div>
<svg class="ab" style="left:26.5px;top:413.5px" width="13" height="12"><rect x="0.5" y="1" width="12" height="9.5" fill="#3a80d8" stroke="#1a4a98" stroke-width=".7"/><circle cx="6.5" cy="5.5" r="2.5" fill="#f0d050"/><rect x="1.5" y="6.5" width="6" height="3" fill="#222"/></svg>
<svg class="ab" style="left:46px;top:413px" width="12" height="12"><circle cx="6" cy="6" r="5.5" fill="#e03a30"/><path d="M6,6 L0.8,8.8 A5.5,5.5 0 0 0 9.5,10.4 Z" fill="#2aa040"/><path d="M6,6 L9.5,10.4 A5.5,5.5 0 0 0 11.5,5 Z" fill="#f8c020"/><circle cx="6" cy="6" r="2.6" fill="#fff"/><circle cx="6" cy="6" r="1.9" fill="#2a70e0"/></svg>
<svg class="ab" style="left:65.5px;top:413px" width="12" height="12"><circle cx="6" cy="6" r="5.5" fill="#1a78c8"/><path d="M1.5,6 Q4,3 5,8 Q6,10.5 8,5 Q9,3 10.5,5" stroke="#9ad048" stroke-width="1.5" fill="none"/></svg>
<svg class="ab" style="left:84px;top:413px" width="12" height="12"><rect x="0.5" y="2.5" width="11" height="8.5" fill="#f4d880" stroke="#c8a040" stroke-width=".6"/><rect x="2" y="0.5" width="3" height="2" fill="#e84a3a"/><rect x="6" y="0.5" width="3" height="2" fill="#3aa848"/><rect x="2" y="6" width="8" height="4" fill="#4aa8e8"/></svg>
<div class="ab" style="left:97.50px;top:412.50px;width:3.00px;height:14.00px;background:#9a9a9a;"></div>
<svg class="ab" style="left:105px;top:413px" width="13" height="12"><path d="M3,1 L11,2 L9,11 L1,10 Z" fill="#68c8e8" stroke="#3a8ab0" stroke-width=".6"/><path d="M9,11 L12,4 L11,2" fill="#e8f4f8" stroke="#8ab" stroke-width=".5"/></svg>
<svg class="ab" style="left:125px;top:413px" width="13" height="12"><rect x="5" y="1" width="7.5" height="10" fill="#fff" stroke="#e05a3a" stroke-width=".7"/><rect x="0.5" y="1.5" width="8" height="9" fill="#d84a28"/><text x="2" y="9.3" font-family="Liberation Sans" font-weight="bold" font-size="7.5" fill="#fff">P</text></svg>
<svg class="ab" style="left:145.5px;top:413.5px" width="12" height="12"><circle cx="6" cy="6" r="5.6" fill="#111"/><circle cx="6" cy="6" r="4.6" fill="none" stroke="#fff" stroke-width=".6"/><path d="M3.2,3.5 L4.6,3 L4.6,7.3 Q5.3,8.2 6,7.5 L6,3.3 L7.6,3 L7.6,7.6 L8.6,7.2 L8.3,8.6 Q7,9.5 6,8.8 Q4,9.5 3.5,8.3 Z" fill="#fff"/></svg>
<div class="ab" style="left:700.50px;top:412.00px;width:60.00px;height:15.50px;background:transparent;border:1px solid;border-color:#808080 #fff #fff #808080"></div>
<div class="t" id="t93" style="left:703.00px;top:417.50px;font-size:5px;color:#222;font-weight:bold;">A</div>
<svg class="ab" style="left:710px;top:415.5px" width="8" height="8"><circle cx="4" cy="4" r="3" fill="#f0f0f0" stroke="#888" stroke-width=".7"/><rect x="3.5" y="2" width="1" height="4" fill="#666"/></svg>
<svg class="ab" style="left:719px;top:414.5px" width="9" height="9"><rect x="0.5" y="1" width="7" height="5" fill="#ddd" stroke="#777" stroke-width=".6"/><rect x="2" y="6" width="7" height="2.5" fill="#ccc" stroke="#888" stroke-width=".6"/></svg>
<div class="t" id="t94" style="left:735.00px;top:414.38px;font-size:5.3px;color:#222;transform:scaleX(0.923);">16:09</div>
<div class="t" id="t95" style="left:731.00px;top:421.00px;font-size:5px;color:#222;transform:scaleX(0.950);">2019/1/4</div>
<div class="ab" style="left:753.00px;top:418.00px;width:7.00px;height:4.50px;background:#2a6ae0;"></div>
</body></html>
